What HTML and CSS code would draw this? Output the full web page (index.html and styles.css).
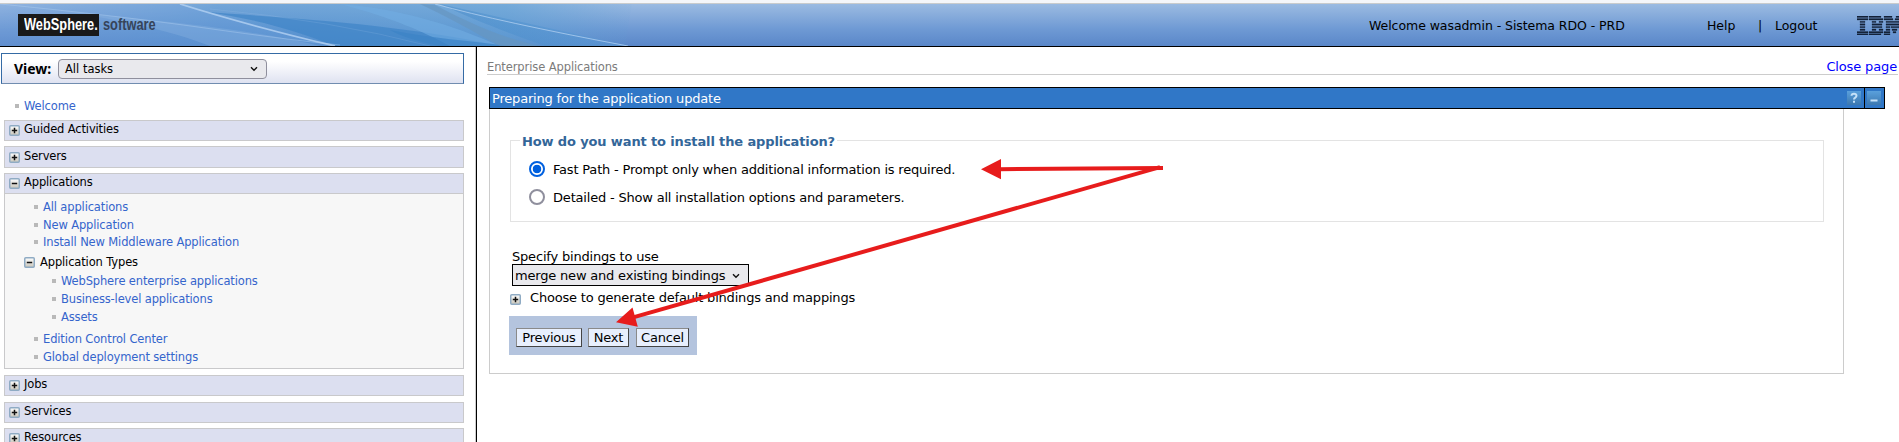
FILE: index.html
```
<!DOCTYPE html>
<html lang="en">
<head>
<meta charset="utf-8">
<title>WebSphere Integrated Solutions Console</title>
<link rel="stylesheet" href="styles.css">
</head>
<body>
<svg class="defs" width="0" height="0">
  <defs>
    <linearGradient id="btn" x1="0" y1="0" x2="0" y2="1"><stop offset="0" stop-color="#fff"/><stop offset="1" stop-color="#c9c5b9"/></linearGradient>
    <linearGradient id="ctl" x1="0" y1="0" x2="0" y2="1"><stop offset="0" stop-color="#5aa0dc"/><stop offset="1" stop-color="#3c78b0"/></linearGradient>
    <symbol id="plus" viewBox="0 0 11 11"><rect x=".75" y=".75" width="9.5" height="9.5" rx="1" fill="url(#btn)" stroke="#8fabc4" stroke-width="1.5"/><path d="M2.800 5.5h5.400M5.5 2.800v5.400" stroke="#111" stroke-width="1.5"/></symbol>
    <symbol id="minus" viewBox="0 0 11 11"><rect x=".75" y=".75" width="9.5" height="9.5" rx="1" fill="url(#btn)" stroke="#8fabc4" stroke-width="1.5"/><path d="M2.800 5.5h5.400" stroke="#111" stroke-width="1.5"/></symbol>
  </defs>
</svg>
<header class="banner">
  <svg class="waves" width="632" height="42" viewBox="0 0 632 42">
    <defs>
      <linearGradient id="w1" x1="0" y1="0" x2="1" y2="0"><stop offset="0" stop-color="#4a90cf" stop-opacity="0"/><stop offset=".35" stop-color="#4a90cf" stop-opacity=".5"/><stop offset=".8" stop-color="#5b9fd4" stop-opacity=".6"/><stop offset="1" stop-color="#5b9fd4" stop-opacity=".05"/></linearGradient>
      <linearGradient id="w2" x1="0" y1="0" x2="1" y2="0"><stop offset="0" stop-color="#3a82c4" stop-opacity=".5"/><stop offset="1" stop-color="#5b9cd8" stop-opacity=".7"/></linearGradient>
    </defs>
    <path d="M0 0H632L625 42H0Z" fill="url(#w1)"/>
    <path d="M180 0L335 42H0V0Z" fill="#6fa0dc" opacity=".3"/>
    <path d="M0 0C90 12 220 18 320 42H210C150 18 60 6 0 0Z" fill="#8bb4e2" opacity=".35"/>
    <path d="M205 8C290 14 400 20 500 42H335C290 24 250 14 205 8Z" fill="#3c83c6" opacity=".65"/>
    <path d="M340 0C400 5 450 20 500 42H450C410 20 370 8 340 0Z" fill="#72ade2" opacity=".6"/>
    <path d="M390 26C430 34 470 37 510 42H440C420 38 400 32 390 26Z" fill="#3c83c6" opacity=".7"/>
    <path d="M435 1C460 14 500 34 540 42H500C470 26 450 14 420 0Z" fill="#6795c0" opacity=".7"/>
    <path d="M440 0L630 42H545C510 30 470 14 440 0Z" fill="url(#w2)" opacity=".7"/>
    <g fill="none" stroke="#b4d2f2">
      <path d="M180 0Q250 22 335 42" stroke-width="1.8" opacity=".8"/>
      <path d="M0 0Q120 12 205 24T340 41" opacity=".4"/>
      <path d="M435 0Q500 18 628 42" opacity=".75"/>
      <path d="M210 5Q330 16 430 42" opacity=".15"/>
    </g>
  </svg>
  <div class="brand"><span class="brand-name"><span class="narrow">WebSphere.</span></span><span class="brand-kind narrow">software</span></div>
  <div class="who">Welcome wasadmin - Sistema RDO - PRD</div>
  <a class="help">Help</a><span class="bar">|</span><a class="logout">Logout</a>
  <svg class="ibm" width="42" height="19" viewBox="0 0 42 19">
    <path fill="#14233a" stroke="#14233a" stroke-width=".3" d="M0 0h11v1.4H0zM0 2.6h11v1.4H0zM3 5.2h5v1.4H3zM3 7.8h5v1.4H3zM3 10.4h5v1.4H3zM3 13h5v1.4H3zM0 15.6h11v1.4H0zM0 17.8h11V19H0zM12 0h12v1.4H12zM12 2.6h14v1.4H12zM15 5.2h4v1.4h-4zM22 5.2h4v1.4h-4zM15 7.8h10v1.4H15zM15 10.4h10v1.4H15zM15 13h4v1.4h-4zM22 13h4v1.4h-4zM12 15.6h14v1.4H12zM12 17.8h12V19H12zM27 0h8v1.4h-8zM39 0h3v1.4h-3zM27 2.6h9v1.4h-9zM38 2.6h4v1.4h-4zM29 5.2h13v1.4H29zM29 7.8h13v1.4H29zM29 10.4h4v1.4h-4zM34 10.4h8v1.4h-8zM29 13h4v1.4h-4zM35 13h5v1.4h-5zM27 15.6h6v1.4h-6zM36 15.6h3v1.4h-3zM27 17.8h6V19h-6z"/>
  </svg>
</header>
<div class="columns">
  <nav class="side">
    <div class="view"><b>View:</b><div class="picker"><span>All tasks</span><svg width="8" height="6" viewBox="0 0 8 6"><path d="M1 1.2L4 4.2L7 1.2" fill="none" stroke="#111" stroke-width="1.4"/></svg></div></div>
    <div class="link welcome">Welcome</div>
    <div class="section"><svg class="tog"><use href="#plus"/></svg><span>Guided Activities</span></div>
    <div class="section tall"><svg class="tog"><use href="#plus"/></svg><span>Servers</span></div>
    <div class="section open"><svg class="tog"><use href="#minus"/></svg><span>Applications</span></div>
    <div class="tree">
      <div class="link">All applications</div>
      <div class="link second">New Application</div>
      <div class="link">Install New Middleware Application</div>
      <div class="group"><svg class="tog"><use href="#minus"/></svg><span>Application Types</span></div>
      <div class="link deep">WebSphere enterprise applications</div>
      <div class="link deep">Business-level applications</div>
      <div class="link deep">Assets</div>
      <div class="link after">Edition Control Center</div>
      <div class="link">Global deployment settings</div>
    </div>
    <div class="section jobs"><svg class="tog"><use href="#plus"/></svg><span>Jobs</span></div>
    <div class="section services"><svg class="tog"><use href="#plus"/></svg><span>Services</span></div>
    <div class="section last"><svg class="tog"><use href="#plus"/></svg><span>Resources</span></div>
  </nav>
  <main class="main">
    <div class="crumbs"><span>Enterprise Applications</span><a>Close page</a></div>
    <div class="titlebar">
      <span class="title">Preparing for the application update</span>
      <svg class="ctl" width="14" height="14" viewBox="0 0 14 14"><rect width="14" height="14" fill="url(#ctl)"/><path d="M4.5 4.8Q4.6 2.8 7 2.8T9.5 4.8Q9.5 6 8 6.8Q7 7.4 7 8.6M7 9.8v2" fill="none" stroke="#c4e0f8" stroke-width="2"/></svg>
      <span class="split"></span>
      <svg class="ctl" width="14" height="14" viewBox="0 0 14 14"><rect width="14" height="14" fill="url(#ctl)"/><path d="M3.5 9.5h7" stroke="#c4e0f8" stroke-width="2"/></svg>
    </div>
    <div class="panel">
      <section class="choices">
        <h2>How do you want to install the application?</h2>
        <div class="option"><span class="radio on"></span><span class="caption">Fast Path - Prompt only when additional information is required.</span></div>
        <div class="option"><span class="radio"></span><span class="caption">Detailed - Show all installation options and parameters.</span></div>
      </section>
      <div class="label">Specify bindings to use</div>
      <div class="select"><span>merge new and existing bindings</span><svg width="8" height="6" viewBox="0 0 8 6"><path d="M1 1.2L4 4.2L7 1.2" fill="none" stroke="#111" stroke-width="1.4"/></svg></div>
      <div class="expand"><svg class="tog"><use href="#plus"/></svg><span>Choose to generate default bindings and mappings</span></div>
      <div class="actions"><button class="prev">Previous</button><button class="next">Next</button><button class="cancel">Cancel</button></div>
    </div>
  </main>
</div>
<svg class="arrows" width="1899" height="442" viewBox="0 0 1899 442">
  <g stroke="#e71c1c" stroke-width="4"><path d="M999 169.2L1163 168"/><path d="M1160 167.2L634 317.2"/></g>
  <path d="M981 169.3L1001 159v20.300zM616 322.300L632.500 307.500L637.800 326.800z" fill="#e71c1c"/>
</svg>
</body>
</html>
```
FILE: styles.css
```
* { box-sizing: border-box; }
body { margin: 0; width: 1899px; height: 442px; overflow: hidden; position: relative; background: #fff; color: #000; font: 13px/16px "DejaVu Sans", Verdana, sans-serif; letter-spacing: -.19px; white-space: nowrap; }
.defs, .arrows { position: absolute; left: 0; top: 0; }
.banner { position: relative; height: 47px; border-top: 3px solid #f5f6f9; border-bottom: 1px solid #000; box-shadow: inset 0 1px #c9cbcc; background: linear-gradient(#9dbce2, #6f9ad4 60%, #5a87c9); display: flex; align-items: center; padding-top: 1px; font-size: 12.500px; letter-spacing: -.06px; }
.waves { position: absolute; left: 0; top: 1px; }
.brand { position: relative; display: flex; align-items: center; margin-left: 18px; height: 22px; width: 145px; margin-top: -1px; font: bold 16px/22px "Liberation Sans", sans-serif; letter-spacing: 0; }
.narrow { display: block; transform: scaleX(.8); transform-origin: 0 50%; }
.brand-name { background: #191919; color: #fff; width: 81px; height: 22px; padding-left: 6px; flex: none; }
.brand-name .narrow { width: 75px; }
.brand-kind { color: #36445a; margin-left: 4px; }
.who { margin-left: 1206px; width: 338px; margin-top: 2px; }
.help { width: 51px; margin-top: 2px; }
.bar { width: 17px; margin-top: 1px; }
.logout { width: 82px; margin-top: 2px; }
.ibm { flex: none; }
.columns { display: flex; height: 395px; }
.side { width: 477px; flex: none; border-right: 1px solid #000; box-shadow: inset -1px 0 #ccc; padding: 6px 0 0 4px; font-size: 11.500px; letter-spacing: -.14px; overflow: hidden; }
.view { margin-left: -3px; width: 463px; height: 31px; border: 1px solid #356ba5; border-bottom-color: #718db0; background: linear-gradient(#fff 25%, #dfe2f1); display: flex; align-items: center; padding-left: 12px; letter-spacing: 0; }
.view b { font: bold 14px/20px "Noto Sans", sans-serif; width: 44px; }
.picker { width: 209px; height: 20px; border: 1px solid #8f8f9d; border-radius: 4px; background: #e9e9ed; display: flex; align-items: center; justify-content: space-between; padding: 0 8px 0 6px; }
.link { height: 18px; line-height: 18px; color: #3565cc; display: flex; align-items: center; gap: 5px; }
.link::before { content: ""; width: 4px; height: 4px; background: #b9b9b9; }
.welcome { margin: 13px 0 5px 11px; }
.section { width: 460px; height: 21px; border: 1px solid #c9c9cb; background: #dcdff0; display: flex; align-items: center; padding-left: 4px; gap: 4px; margin-bottom: 5px; line-height: 17px; }
.section span { margin-top: -2px; }
.tog { width: 11px; height: 11px; flex: none; display: block; }
.tall { height: 22px; }
.open { margin-bottom: 0; }
.tree { width: 460px; height: 175px; border: 1px solid #c9c9cb; border-top: 0; background: #f7f7f7; padding: 4px 0 0 29px; margin-bottom: 6px; }
.second { height: 17px; }
.group { display: flex; gap: 5px; align-items: center; margin-left: -10px; height: 21px; padding-top: 1px; }
.group span { margin-top: -1px; }
.deep { margin-left: 18px; }
.after { margin-top: 4px; }
.jobs { margin-bottom: 6px; }
.main { flex: 1; padding: 9px 1px 0 10px; }
.crumbs { height: 19px; border-bottom: 1px solid #ccc; display: flex; justify-content: space-between; line-height: 22px; }
.crumbs span { font-size: 11.500px; letter-spacing: -.1px; color: #7b7b7b; }
.crumbs a { color: #00f; letter-spacing: -.14px; margin-right: 1px; }
.titlebar { margin: 12px 0 0 2px; width: 1396px; height: 22px; border: 1px solid #000; background: #3077c7; color: #fff; display: flex; align-items: center; padding-left: 2px; }
.title { width: 1355px; padding-top: 2px; }
.ctl { flex: none; }
.split { width: 1px; height: 20px; background: #000; margin: 0 2px 0 3px; flex: none; }
.panel { margin-left: 2px; width: 1355px; height: 265px; border: 1px solid #ccc; border-top: 0; padding: 31px 0 0 19px; }
.choices { margin-left: 1px; width: 1314px; height: 82px; border: 1px solid #e3e3e3; padding: 0 0 0 18px; }
.choices h2 { font-size: 13px; line-height: 18px; height: 16px; width: 317px; margin: -8px 0 6px -9px; padding-left: 2px; background: #fff; color: #336699; letter-spacing: -.13px; }
.option { display: flex; gap: 8px; height: 28px; align-items: center; }
.caption { padding-top: 2px; }
.radio { width: 16px; height: 16px; border: 2px solid #8f8f9d; border-radius: 50%; background: #fff; flex: none; }
.on { border-color: #0060df; background: radial-gradient(#0060df 4px, #fff 4.600px); }
.label { margin: 27px 0 0 3px; height: 15px; }
.select { margin-left: 3px; width: 237px; height: 22px; border: 1px solid #000; background: #e9e9ed; display: flex; align-items: center; justify-content: space-between; padding: 1px 8px 0 2px; }
.expand { display: flex; align-items: center; gap: 9px; margin-left: 1px; height: 25px; }
.expand .tog { margin-top: 1px; }
.expand span { margin-top: -2px; }
.actions { margin-top: 5px; width: 188px; height: 39px; background: #b4c4de; display: flex; padding: 12px 0 0 7px; }
.actions button { flex: none; height: 19px; padding: 0; font: 13px/15px "DejaVu Sans", sans-serif; letter-spacing: -.19px; background: #e8effd; border: 1px solid #8a8a8a; border-right-color: #444; border-bottom-color: #444; }
.actions .prev { width: 66px; }
.actions .next { width: 41px; margin: 0 7px 0 6px; }
.actions .cancel { width: 53px; }
```
